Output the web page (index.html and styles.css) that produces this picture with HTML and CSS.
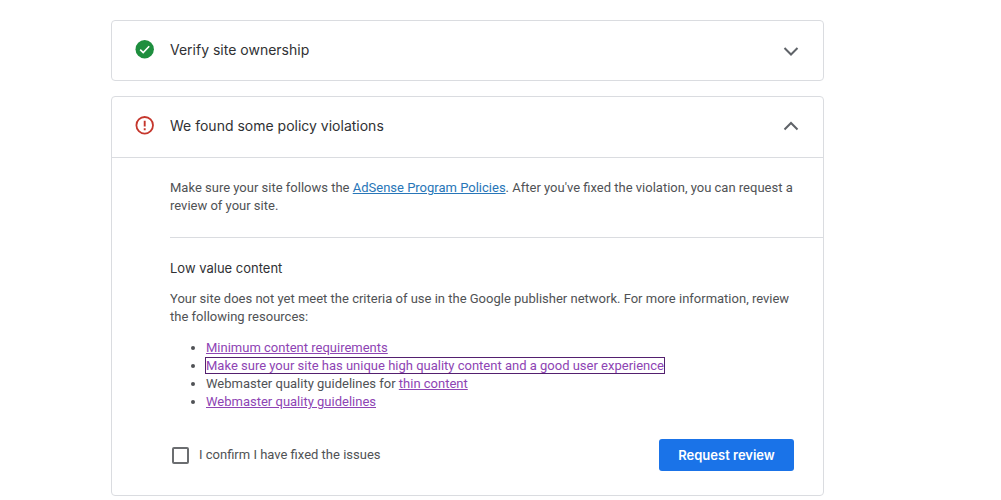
FILE: index.html
```html
<!DOCTYPE html>
<html lang="en">
<head>
<meta charset="utf-8">
<meta name="viewport" content="width=device-width, initial-scale=1">
<title>Site review</title>
<link rel="stylesheet" href="styles.css">
</head>
<body>
<main class="page">
  <section class="card">
    <h2 class="card-heading">
      <button class="card-toggle" type="button" aria-expanded="false">
        <svg class="status" viewBox="0 0 20 20" aria-hidden="true"><circle cx="9.7" cy="9.2" r="9.2" fill="#1e8e3e"/><path d="M5.2 9.6l3 3 6-6.4" fill="none" stroke="#fff" stroke-width="1.6"/></svg>
        <span class="card-title">Verify site ownership</span>
        <svg class="chevron" viewBox="0 0 16 16" aria-hidden="true"><path d="M1.5 6L8 12.5 14.5 6"/></svg>
      </button>
    </h2>
  </section>
  <section class="card">
    <h2 class="card-heading">
      <button class="card-toggle" type="button" aria-expanded="true">
        <svg class="status" viewBox="0 0 20 20" aria-hidden="true"><circle cx="9.7" cy="9.3" r="8.3" fill="none" stroke="#c5362c" stroke-width="1.8"/><path d="M9.7 4.7v5.8M9.7 12.2v2" stroke="#c5362c" stroke-width="1.9"/></svg>
        <span class="card-title">We found some policy violations</span>
        <svg class="chevron" viewBox="0 0 16 16" aria-hidden="true"><path d="M1.5 11.5L8 5l6.5 6.5"/></svg>
      </button>
    </h2>
    <div class="card-body">
      <p class="intro">Make sure your site follows the <a class="link" href="#policies">AdSense Program Policies</a>. After you've fixed the violation, you can request a review of your site.</p>
      <div class="violation">
        <h3 class="violation-title">Low value content</h3>
        <p class="text">Your site does not yet meet the criteria of use in the Google publisher network. For more information, review the following resources:</p>
        <ul class="resources">
          <li><a class="link visited" href="#minimum">Minimum content requirements</a></li>
          <li><a class="link visited focused" href="#unique">Make sure your site has unique high quality content and a good user experience</a></li>
          <li>Webmaster quality guidelines for <a class="link visited" href="#thin">thin content</a></li>
          <li><a class="link visited" href="#guidelines">Webmaster quality guidelines</a></li>
        </ul>
        <form class="actions">
          <label class="confirm"><input class="checkbox" type="checkbox">I confirm I have fixed the issues</label>
          <button class="submit" type="button">Request review</button>
        </form>
      </div>
    </div>
  </section>
</main>
</body>
</html>
```
FILE: styles.css
```css
* {
  box-sizing: border-box;
}

body {
  margin: 0;
  background: #fff;
  color: #505255;
  font: 13px/18px Roboto, "Liberation Sans", sans-serif;
}

h2, h3, p, ul {
  margin: 0;
  padding: 0;
}

.page {
  display: grid;
  gap: 15px;
  max-width: 1001px;
  padding: 20px 177px 4px 111px;
}

.card {
  border: 1px solid #dadce0;
  border-radius: 4px;
}

.card-heading {
  font-weight: 400;
}

.card-toggle {
  display: flex;
  align-items: center;
  width: 100%;
  padding: 18px 24px 19px 23px;
  border: 0;
  background: none;
  color: #303134;
  font: 14px/22px Inter, "Liberation Sans", sans-serif;
  text-align: left;
}

.status {
  width: 20px;
  height: 20px;
  margin-right: 15px;
}

.card-title {
  flex: 1;
}

.chevron {
  width: 16px;
  height: 16px;
  fill: none;
  stroke: #5f6368;
  stroke-width: 2;
}

.card-body {
  margin-top: 1px;
  padding-left: 58px;
  border-top: 1px solid #dadce0;
}

.intro {
  padding: 21px 24px 22px 0;
}

.violation {
  padding: 21px 29px 24px 0;
  border-top: 1px solid #dadce0;
}

.violation-title {
  margin-bottom: 13px;
  color: #303134;
  font: 13px/18px Inter, "Liberation Sans", sans-serif;
}

.resources {
  margin-top: 13px;
  padding-left: 36px;
}

.link {
  color: #2876b8;
}

.visited {
  color: #8e44b4;
}

.focused {
  outline: 1px solid #54206f;
  text-decoration: none;
}

.actions {
  display: flex;
  align-items: center;
  justify-content: space-between;
  margin-top: 28px;
}

.confirm {
  display: flex;
  align-items: center;
  gap: 10px;
}

.checkbox {
  width: 17px;
  height: 17px;
  margin: 0 0 0 2px;
  border: 2px solid #6b6d70;
  border-radius: 2px;
  appearance: none;
}

.submit {
  min-width: 135px;
  padding: 7px 16px;
  border: 0;
  border-radius: 3px;
  background: #1a73e8;
  color: #fff;
  font: 600 13px/18px Inter, "Liberation Sans", sans-serif;
}
```
